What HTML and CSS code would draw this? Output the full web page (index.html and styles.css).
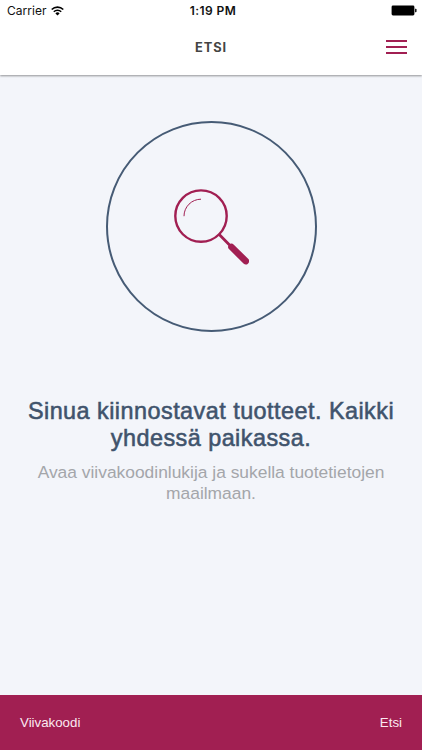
FILE: index.html
```html
<!DOCTYPE html>
<html lang="fi">
<head>
<meta charset="utf-8">
<meta name="viewport" content="width=device-width, initial-scale=1">
<title>Etsi</title>
<link rel="stylesheet" href="styles.css">
</head>
<body>
<div class="app">
  <header class="header">
    <div class="status">
      <div class="status-left"><span class="carrier">Carrier</span>
        <svg class="wifi" width="13" height="10" viewBox="0 0 13 10" fill="none" stroke="#000" stroke-width="1.6"><path d="M.7 3.5a8.3 8.3 0 0 1 11.6 0M2.8 5.7a5.3 5.3 0 0 1 7.4 0"/><path d="M4.4 7.4a3 3 0 0 1 4.2 0L6.5 9.5z" fill="#000" stroke="none"/></svg>
      </div>
      <span class="time">1:19 PM</span>
      <div class="status-right">
        <svg width="26" height="11" viewBox="0 0 26 11"><rect x=".6" y=".6" width="22.8" height="9.8" rx="1.4"/><path d="M24.1 3.8h.6q.8 0 .8 .8v1.8q0 .8-.8 .8h-.6z"/></svg>
      </div>
    </div>
    <div class="nav">
      <h1 class="nav-title">ETSI</h1>
      <button class="menu" aria-label="Valikko"><span></span><span></span><span></span></button>
    </div>
  </header>
  <main class="content">
    <div class="circle">
      <svg width="76" height="76" viewBox="0 0 76 76" fill="none" stroke="#a11f52" stroke-linecap="round"><circle cx="28" cy="27.1" r="25.7" stroke-width="2.4"/><path d="M11 27.2A17 17 0 0 1 28 10.2" stroke-width="1" stroke-linecap="butt"/><path d="M46.5 45.8L58 57.4" stroke-width="2.8"/><path d="M58.5 58L72.8 72.1" stroke-width="6.6"/></svg>
    </div>
    <h2 class="headline"><span class="line">Sinua kiinnostavat tuotteet. Kaikki</span> <span class="line">yhdessä paikassa.</span></h2>
    <p class="description"><span class="line">Avaa viivakoodinlukija ja sukella tuotetietojen</span> <span class="line">maailmaan.</span></p>
  </main>
  <footer class="footer"><span>Viivakoodi</span><span>Etsi</span></footer>
</div>
</body>
</html>
```
FILE: styles.css
```css
* { box-sizing: border-box; }
body { margin: 0; font-family: "Liberation Sans", Arial, sans-serif; }
.app { display: flex; flex-direction: column; height: 750px; background: #f3f5fa; overflow: hidden; }
.header { flex: none; height: 75px; background: #fff; box-shadow: 0 1px 2px rgba(0, 0, 0, .4); z-index: 1; }
.status { display: grid; grid-template-columns: 1fr auto 1fr; height: 21px; align-items: center; padding: 0 5px 0 7px; font-family: Inter, sans-serif; font-size: 12px; color: #111; }
.status-left { display: flex; align-items: center; gap: 5px; }
.wifi { margin-left: -1px; }
.carrier { letter-spacing: .05px; }
.time { font-weight: 600; letter-spacing: .4px; margin-left: 2px; }
.status-right { display: flex; justify-content: flex-end; }
.nav { display: grid; grid-template-columns: 1fr auto 1fr; align-items: center; height: 54px; padding: 0 15px; }
.nav-title { grid-column: 2; margin: 0; font: 700 12.8px/16px Inter, sans-serif; letter-spacing: .9px; color: #444; }
.menu { display: flex; flex-direction: column; gap: 4px; justify-self: end; width: 21px; margin: 0 0 2px; padding: 0; border: 0; background: none; }
.menu span { display: block; width: 21px; height: 2px; background: #a11f52; }
.content { flex: 1; display: flex; flex-direction: column; align-items: center; padding-top: 46px; }
.circle { display: flex; align-items: center; justify-content: center; width: 211px; height: 211px; border: 2px solid #465b75; border-radius: 50%; }
.line { display: block; white-space: nowrap; }
.headline { margin: 66px 0 0; font-size: 23.4px; font-weight: 400; line-height: 27px; letter-spacing: .47px; text-align: center; color: #40536c; -webkit-text-stroke: .55px #40536c; }
.description { margin: 10px 0 0; font-size: 17.4px; line-height: 21px; text-align: center; color: #a4a6aa; }
.footer { flex: none; display: flex; justify-content: space-between; align-items: center; height: 55px; padding: 0 20px; background: #a11f52; color: #fbe9f1; font-size: 13.3px; }
```
